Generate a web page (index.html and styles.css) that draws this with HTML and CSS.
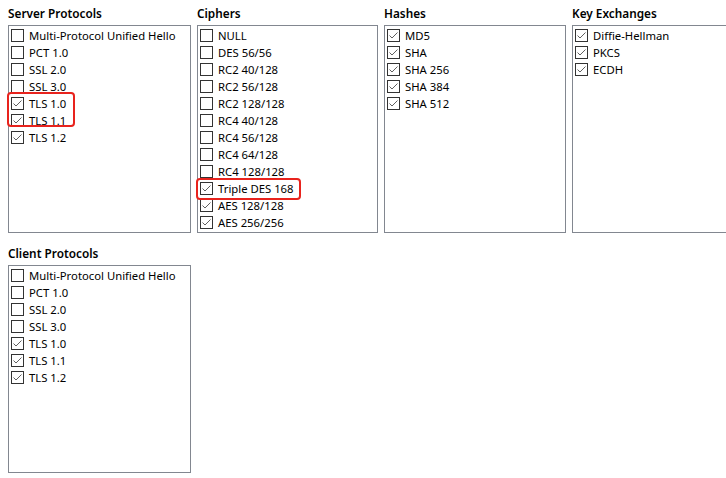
FILE: index.html
```html
<!DOCTYPE html>
<html>
<head>
<meta charset="utf-8">
<link rel="stylesheet" href="styles.css">
</head>
<body>
<div class="page">
  <section class="group">
    <h2 class="title">Server Protocols</h2>
    <div class="list">
      <div class="row"><span class="cb"></span><span class="label">Multi-Protocol Unified Hello</span></div>
      <div class="row"><span class="cb"></span><span class="label">PCT 1.0</span></div>
      <div class="row"><span class="cb"></span><span class="label">SSL 2.0</span></div>
      <div class="row"><span class="cb"></span><span class="label">SSL 3.0</span></div>
      <div class="row"><span class="cb"><svg viewBox="0 0 13 13"><path d="M2.5 6.5 L5 9 L10.5 3.5"/></svg></span><span class="label">TLS 1.0</span></div>
      <div class="row"><span class="cb"><svg viewBox="0 0 13 13"><path d="M2.5 6.5 L5 9 L10.5 3.5"/></svg></span><span class="label">TLS 1.1</span></div>
      <div class="row"><span class="cb"><svg viewBox="0 0 13 13"><path d="M2.5 6.5 L5 9 L10.5 3.5"/></svg></span><span class="label">TLS 1.2</span></div>
    </div>
    <div class="mark mark-server"></div>
  </section>

  <section class="group">
    <h2 class="title">Ciphers</h2>
    <div class="list">
      <div class="row"><span class="cb"></span><span class="label">NULL</span></div>
      <div class="row"><span class="cb"></span><span class="label">DES 56/56</span></div>
      <div class="row"><span class="cb"></span><span class="label">RC2 40/128</span></div>
      <div class="row"><span class="cb"></span><span class="label">RC2 56/128</span></div>
      <div class="row"><span class="cb"></span><span class="label">RC2 128/128</span></div>
      <div class="row"><span class="cb"></span><span class="label">RC4 40/128</span></div>
      <div class="row"><span class="cb"></span><span class="label">RC4 56/128</span></div>
      <div class="row"><span class="cb"></span><span class="label">RC4 64/128</span></div>
      <div class="row"><span class="cb"></span><span class="label">RC4 128/128</span></div>
      <div class="row"><span class="cb"><svg viewBox="0 0 13 13"><path d="M2.5 6.5 L5 9 L10.5 3.5"/></svg></span><span class="label">Triple DES 168</span></div>
      <div class="row"><span class="cb"><svg viewBox="0 0 13 13"><path d="M2.5 6.5 L5 9 L10.5 3.5"/></svg></span><span class="label">AES 128/128</span></div>
      <div class="row"><span class="cb"><svg viewBox="0 0 13 13"><path d="M2.5 6.5 L5 9 L10.5 3.5"/></svg></span><span class="label">AES 256/256</span></div>
    </div>
    <div class="mark mark-cipher"></div>
  </section>

  <section class="group">
    <h2 class="title">Hashes</h2>
    <div class="list">
      <div class="row"><span class="cb"><svg viewBox="0 0 13 13"><path d="M2.5 6.5 L5 9 L10.5 3.5"/></svg></span><span class="label">MD5</span></div>
      <div class="row"><span class="cb"><svg viewBox="0 0 13 13"><path d="M2.5 6.5 L5 9 L10.5 3.5"/></svg></span><span class="label">SHA</span></div>
      <div class="row"><span class="cb"><svg viewBox="0 0 13 13"><path d="M2.5 6.5 L5 9 L10.5 3.5"/></svg></span><span class="label">SHA 256</span></div>
      <div class="row"><span class="cb"><svg viewBox="0 0 13 13"><path d="M2.5 6.5 L5 9 L10.5 3.5"/></svg></span><span class="label">SHA 384</span></div>
      <div class="row"><span class="cb"><svg viewBox="0 0 13 13"><path d="M2.5 6.5 L5 9 L10.5 3.5"/></svg></span><span class="label">SHA 512</span></div>
    </div>
  </section>

  <section class="group">
    <h2 class="title">Key Exchanges</h2>
    <div class="list">
      <div class="row"><span class="cb"><svg viewBox="0 0 13 13"><path d="M2.5 6.5 L5 9 L10.5 3.5"/></svg></span><span class="label">Diffie-Hellman</span></div>
      <div class="row"><span class="cb"><svg viewBox="0 0 13 13"><path d="M2.5 6.5 L5 9 L10.5 3.5"/></svg></span><span class="label">PKCS</span></div>
      <div class="row"><span class="cb"><svg viewBox="0 0 13 13"><path d="M2.5 6.5 L5 9 L10.5 3.5"/></svg></span><span class="label">ECDH</span></div>
    </div>
  </section>

  <section class="group">
    <h2 class="title">Client Protocols</h2>
    <div class="list">
      <div class="row"><span class="cb"></span><span class="label">Multi-Protocol Unified Hello</span></div>
      <div class="row"><span class="cb"></span><span class="label">PCT 1.0</span></div>
      <div class="row"><span class="cb"></span><span class="label">SSL 2.0</span></div>
      <div class="row"><span class="cb"></span><span class="label">SSL 3.0</span></div>
      <div class="row"><span class="cb"><svg viewBox="0 0 13 13"><path d="M2.5 6.5 L5 9 L10.5 3.5"/></svg></span><span class="label">TLS 1.0</span></div>
      <div class="row"><span class="cb"><svg viewBox="0 0 13 13"><path d="M2.5 6.5 L5 9 L10.5 3.5"/></svg></span><span class="label">TLS 1.1</span></div>
      <div class="row"><span class="cb"><svg viewBox="0 0 13 13"><path d="M2.5 6.5 L5 9 L10.5 3.5"/></svg></span><span class="label">TLS 1.2</span></div>
    </div>
  </section>
</div>
</body>
</html>
```

FILE: styles.css
```css
html, body {
  margin: 0;
  padding: 0;
  background: #ffffff;
  overflow: hidden;
}

body {
  width: 726px;
  height: 478px;
  font-family: "Noto Sans", "Open Sans", sans-serif;
  color: #000000;
}

.page {
  display: grid;
  grid-template-columns: 183px 181px 182px 182px;
  column-gap: 6px;
  row-gap: 15px;
  padding: 8px 0 0 8px;
  width: 760px;
}

.group {
  position: relative;
  display: flex;
  flex-direction: column;
}

.title {
  margin: 0 0 6px 0;
  font-size: 11.8px;
  line-height: 11px;
  font-weight: 600;
  white-space: nowrap;
}

.list {
  box-sizing: border-box;
  height: 208px;
  border: 1px solid #828790;
  padding-top: 1px;
  display: flex;
  flex-direction: column;
}

.row {
  height: 17px;
  display: flex;
  align-items: center;
  padding-left: 2px;
  font-size: 11.3px;
  white-space: nowrap;
}

.cb {
  box-sizing: border-box;
  width: 13px;
  height: 13px;
  border: 1px solid #333333;
  background: #ffffff;
  margin-right: 5px;
  flex: none;
  position: relative;
}

.cb svg {
  position: absolute;
  left: -1px;
  top: -1px;
  width: 13px;
  height: 13px;
  fill: none;
  stroke: #606060;
  stroke-width: 1;
}

.label {
  line-height: 17px;
}

.mark {
  position: absolute;
  box-sizing: border-box;
  border: 2px solid #e8231d;
  border-radius: 4px;
}

.mark-server {
  left: -1px;
  top: 84px;
  width: 68px;
  height: 35px;
}

.mark-cipher {
  left: -1px;
  top: 170px;
  width: 105px;
  height: 22px;
}
```
